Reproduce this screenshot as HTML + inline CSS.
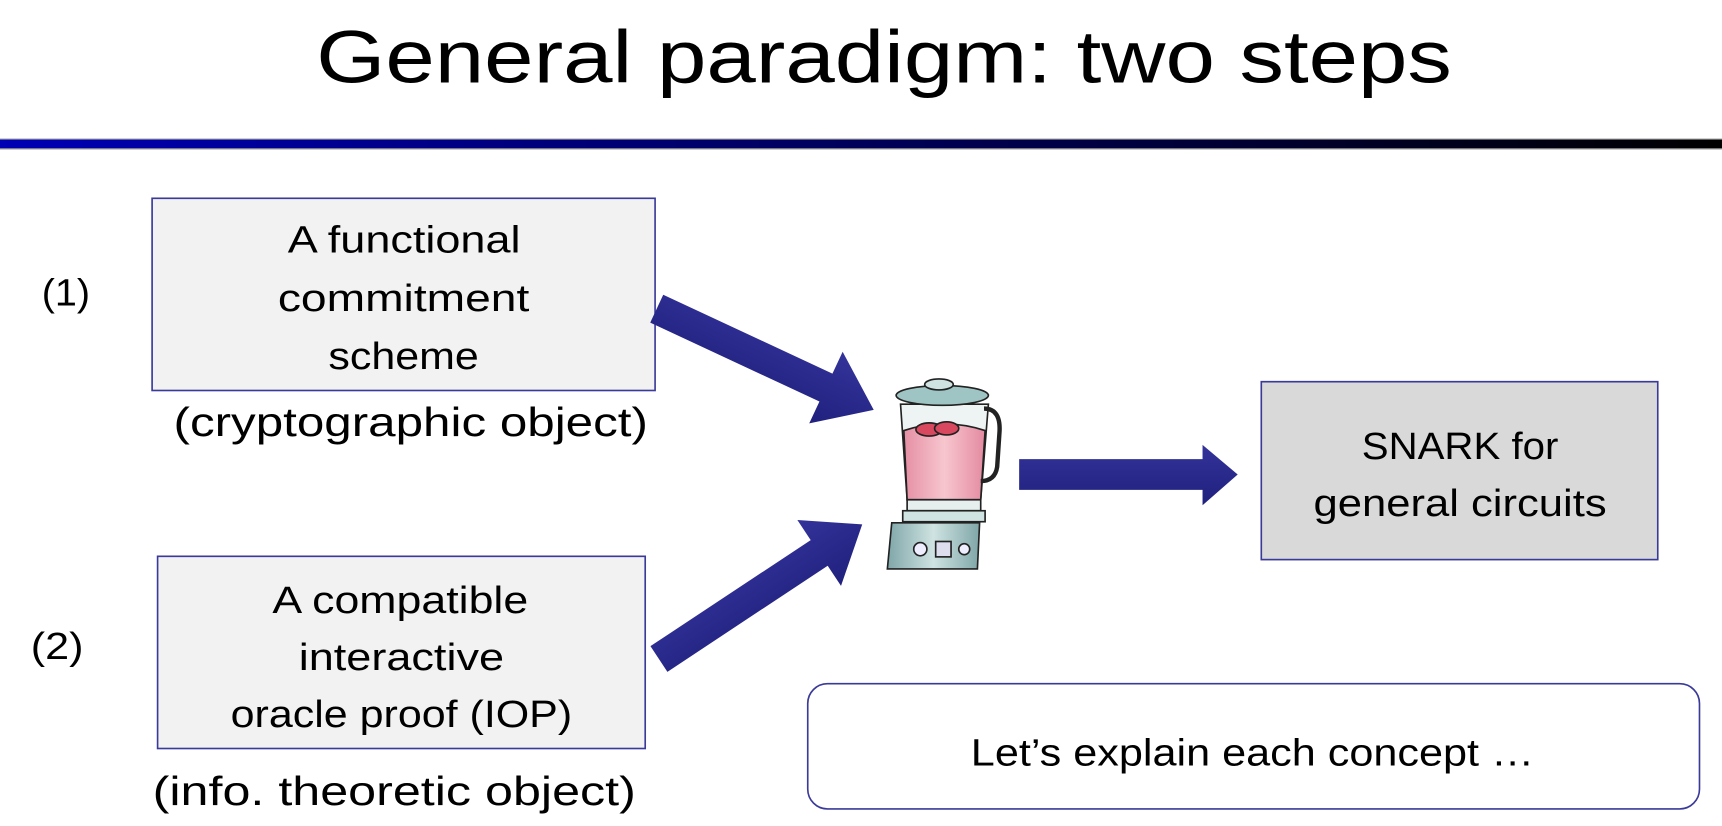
<!DOCTYPE html>
<html><head><meta charset="utf-8"><style>
html,body{margin:0;padding:0;background:#fff;}
svg{display:block;}
text{font-family:"Liberation Sans",sans-serif;fill:#000;}
</style></head><body>
<svg width="1722" height="826" viewBox="0 0 1568 752" xmlns="http://www.w3.org/2000/svg">
<defs>
<linearGradient id="bar" x1="0" x2="1" y1="0" y2="0"><stop offset="0" stop-color="#0000b4"/><stop offset="1" stop-color="#000"/></linearGradient>
<linearGradient id="ar" x1="0" x2="0" y1="0" y2="1"><stop offset="0" stop-color="#33339a"/><stop offset="1" stop-color="#20207e"/></linearGradient>
<linearGradient id="pink" x1="0" x2="1"><stop offset="0" stop-color="#e58fa3"/><stop offset=".5" stop-color="#f7c6cf"/><stop offset="1" stop-color="#e48aa0"/></linearGradient>
<linearGradient id="base" x1="0" x2="1"><stop offset="0" stop-color="#7fa6a8"/><stop offset=".5" stop-color="#cfe3e2"/><stop offset="1" stop-color="#7fa6a8"/></linearGradient>
</defs>
<text x="288" y="75" font-size="68" textLength="1034" lengthAdjust="spacingAndGlyphs">General paradigm:  two steps</text>
<rect x="0" y="126" width="1568" height="1" fill="#aaa"/>
<rect x="0" y="127" width="1568" height="8" fill="url(#bar)"/>
<rect x="0" y="135" width="1568" height="1" fill="#888"/>

<rect x="138.5" y="180.5" width="458" height="175" fill="#f2f2f2" stroke="#3a3a9a" stroke-width="1.5"/>
<text x="262" y="230" font-size="35" textLength="212" lengthAdjust="spacingAndGlyphs">A functional</text>
<text x="253" y="283" font-size="35" textLength="229" lengthAdjust="spacingAndGlyphs">commitment</text>
<text x="299" y="336" font-size="35" textLength="137" lengthAdjust="spacingAndGlyphs">scheme</text>
<text x="38" y="278" font-size="35" textLength="44" lengthAdjust="spacingAndGlyphs">(1)</text>
<text x="158" y="397" font-size="37" textLength="432" lengthAdjust="spacingAndGlyphs">(cryptographic object)</text>

<rect x="143.5" y="506.5" width="444" height="175" fill="#f2f2f2" stroke="#3a3a9a" stroke-width="1.5"/>
<text x="248" y="558" font-size="35" textLength="233" lengthAdjust="spacingAndGlyphs">A compatible</text>
<text x="272" y="610" font-size="35" textLength="187" lengthAdjust="spacingAndGlyphs">interactive</text>
<text x="210" y="662" font-size="35" textLength="311" lengthAdjust="spacingAndGlyphs">oracle proof (IOP)</text>
<text x="28" y="600" font-size="35" textLength="48" lengthAdjust="spacingAndGlyphs">(2)</text>
<text x="139" y="733" font-size="37" textLength="440" lengthAdjust="spacingAndGlyphs">(info. theoretic object)</text>

<rect x="1148.5" y="347.5" width="361" height="162" fill="#d9d9d9" stroke="#3a3a9a" stroke-width="1.5"/>
<text x="1240" y="418" font-size="35" textLength="179" lengthAdjust="spacingAndGlyphs">SNARK for</text>
<text x="1196" y="470" font-size="35" textLength="267" lengthAdjust="spacingAndGlyphs">general circuits</text>

<rect x="735.5" y="622.5" width="812" height="114" rx="18" fill="#fff" stroke="#3a3a9a" stroke-width="1.5"/>
<text x="884" y="697" font-size="35" textLength="513" lengthAdjust="spacingAndGlyphs">Let’s explain each concept …</text>

<!-- arrows -->
<g transform="translate(598,281) rotate(25)"><polygon points="0,-14 170,-14 170,-36 218,0 170,36 170,14 0,14" fill="url(#ar)"/></g>
<g transform="translate(600,600) rotate(-33.5)"><polygon points="0,-14 175,-14 175,-36 222,0 175,36 175,14 0,14" fill="url(#ar)"/></g>
<polygon points="928,418 1095,418 1095,405 1127,432 1095,460 1095,446 928,446" fill="url(#ar)"/>

<!-- blender -->
<g stroke="#222" stroke-width="1.5">
<path d="M820,368 L900,368 L893,455 L826,455 Z" fill="#eef3f3"/>
<path d="M823,392 Q860,380 897,392 L893,455 L826,455 Z" fill="url(#pink)"/>
<ellipse cx="846" cy="391" rx="12" ry="6" fill="#d8485e"/>
<ellipse cx="862" cy="390" rx="11" ry="6" fill="#d8485e"/>
<path d="M896,372 Q912,372 910,395 L908,425 Q906,438 893,438" fill="none" stroke-width="4"/>
<ellipse cx="858" cy="360" rx="42" ry="9" fill="#9fc4c4"/>
<ellipse cx="855" cy="350" rx="13" ry="5" fill="#cfe3e2"/>
<rect x="826" y="455" width="67" height="10" fill="#e6eeee"/>
<rect x="822" y="465" width="75" height="10" fill="#cfe3e2"/>
<path d="M812,476 L892,476 L890,518 L808,518 Z" fill="url(#base)"/>
<circle cx="838" cy="500" r="6" fill="#eef"/>
<rect x="852" y="493" width="14" height="14" fill="#dde"/>
<circle cx="878" cy="500" r="5" fill="#eef"/>
</g>
</svg>
</body></html>
